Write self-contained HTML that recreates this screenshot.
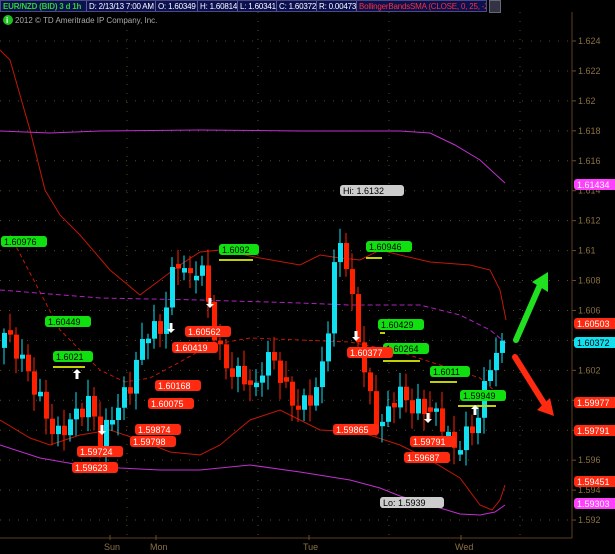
<!DOCTYPE html>
<html><head><meta charset="utf-8">
<style>
body{margin:0;background:#000;width:615px;height:554px;overflow:hidden;font-family:"Liberation Sans",sans-serif}
#top{position:absolute;left:0;top:0;width:487px;height:12px;background:#0a1050;border:1px solid #4a4a80;box-sizing:border-box;font-size:8px;letter-spacing:-0.2px;line-height:11px;white-space:nowrap;overflow:hidden;display:flex}
#top span{box-sizing:border-box;color:#fff;padding:0 2px;border-right:1px solid #5a5a90;overflow:hidden;flex:none}
</style></head><body>
<div id="top"><span style="color:#2fd02f;font-weight:bold;width:86px">EUR/NZD (BID) 3 d 1h</span><span style="width:69px">D: 2/13/13 7:00 AM</span><span style="width:42px">O: 1.60349</span><span style="width:40px">H: 1.60814</span><span style="width:39px">L: 1.60341</span><span style="width:40px">C: 1.60372</span><span style="width:40px">R: 0.00473</span><span style="color:#ff3030;border:none;width:130px">BollingerBandsSMA (CLOSE, 0, 25, -2...</span></div>
<div style="position:absolute;left:489px;top:0;width:10px;height:11px;background:#334;border:1px solid #667"></div>
<svg id="s" width="615" height="554" style="position:absolute;left:0;top:0"></svg>
<script>
const s=document.getElementById('s');let h='';
const Y=p=>41+(1.624-p)/0.002*29.94;
for(let p=1.592;p<=1.6241;p+=0.002){const y=Y(p);h+=`<line x1="0" x2="572" y1="${y}" y2="${y}" stroke="#5a4a20" stroke-dasharray="1,8"/>`;
h+=`<line x1="572" x2="576" y1="${y}" y2="${y}" stroke="#6a5020"/><text x="578" y="${y+3}" fill="#8a7040" font-size="9">${(+p.toFixed(3)).toString()}</text>`;}
for(const x of [127,258,389,520])h+=`<line x1="${x}" x2="${x}" y1="12" y2="537" stroke="#5a4a20" stroke-dasharray="1,8"/>`;
h+=`<line x1="572" x2="572" y1="12" y2="538" stroke="#5a4020"/><line x1="0" x2="572" y1="538" y2="538" stroke="#5a4020"/>`;
for(const [x,t] of [[104,'Sun'],[150,'Mon'],[303,'Tue'],[455,'Wed']])h+=`<text x="${x}" y="550" fill="#8a7040" font-size="9">${t}</text><line x1="${x+6}" x2="${x+6}" y1="535" y2="540" stroke="#6a5020"/>`;
const pl=(pts,c,d,w)=>`<polyline fill="none" stroke="${c}" stroke-width="${w||1}" ${d?'stroke-dasharray="'+d+'"':''} points="${pts}"/>`;
h+=pl('0,50 10,60 30,130 45,190 60,215 80,235 110,270 140,295 160,280 180,265 200,252 220,250 260,258 300,265 320,255 340,258 360,260 380,250 400,255 430,262 470,265 490,270 500,290 506,320','#c01808');
h+=pl('0,420 30,438 50,445 80,435 110,430 140,440 170,452 200,455 220,445 250,420 280,410 300,420 320,430 360,432 400,445 430,460 460,478 480,505 492,510 500,500 505,485','#c01808');
h+=pl('10,235 60,330 100,370 125,382 150,378 180,362 210,345 250,338 300,340 350,342 400,352 440,365 480,378 505,400','#c01808','4,3');
h+=pl('0,290 100,298 200,300 300,303 350,305 420,305 460,315 490,330 506,343','#b020c0','5,3');
h+=pl('0,131 50,133 100,131 200,130 300,131 400,131 430,133 455,145 480,160 505,183','#c030d0');
h+=pl('0,445 40,458 80,465 120,468 160,470 200,470 250,465 300,472 350,480 380,488 400,496 430,505 460,514 480,515 495,512 505,505','#c030d0');
const kp=[[4,1.6045],[20,1.603],[40,1.600],[55,1.5975],[75,1.599],[90,1.6],[100,1.5972],[112,1.599],[130,1.601],[140,1.6035],[150,1.605],[160,1.6045],[170,1.608],[180,1.6095],[190,1.608],[200,1.6095],[210,1.6056],[218,1.6035],[228,1.602],[245,1.6015],[255,1.6005],[265,1.603],[275,1.6025],[290,1.6],[300,1.5995],[315,1.6005],[325,1.603],[333,1.6085],[340,1.6105],[347,1.609],[353,1.606],[360,1.6035],[368,1.6005],[380,1.598],[392,1.6],[402,1.6005],[412,1.5995],[425,1.5995],[440,1.5988],[455,1.5965],[462,1.5975],[472,1.598],[480,1.5995],[490,1.6025],[500,1.6035],[505,1.6037]];
const ip=x=>{for(let i=1;i<kp.length;i++)if(x<=kp[i][0]){const a=kp[i-1],b=kp[i];return a[1]+(b[1]-a[1])*(x-a[0])/(b[0]-a[0]);}return 1.6037};
let prev=1.6035;
for(let x=4,i=0;x<=505;x+=6,i++){let c=ip(x)+Math.sin(i*2.3)*0.0006;if(x>=503)c=1.60372;let o=prev;if(Math.abs(c-o)<0.0002)o=c+0.0003*(i%2?1:-1);const up=c>o;const hi=Math.max(o,c)+0.0003+Math.abs(Math.sin(i*1.7))*0.0008,lo=Math.min(o,c)-0.0003-Math.abs(Math.cos(i*1.3))*0.0008;const col=up?'#10e0f0':'#ff2000';
h+=`<line x1="${x}" x2="${x}" y1="${Y(x>=503?1.60814:hi)}" y2="${Y(lo)}" stroke="${col}"/><rect x="${x-2}" y="${Y(Math.max(o,c))}" width="5" height="${Math.max(2,Math.abs(Y(o)-Y(c)))}" fill="${col}"/>`;prev=c;}
const lab=(x,y,t,bg,fg)=>`<rect x="${x}" y="${y}" width="${t.length*6+4}" height="11" rx="3" fill="${bg}"/><text x="${x+3}" y="${y+9}" fill="${fg||'#fff'}" font-size="9">${t}</text>`;
[[1,236,'1.60976'],[45,316,'1.60449'],[53,351,'1.6021'],[219,244,'1.6092'],[366,241,'1.60946'],[378,319,'1.60429'],[383,343,'1.60264'],[430,366,'1.6011'],[460,390,'1.59949']].forEach(a=>h+=lab(a[0],a[1],a[2],'#10e010','#000'));
[[185,326,'1.60562'],[172,342,'1.60419'],[155,380,'1.60168'],[148,398,'1.60075'],[135,424,'1.59874'],[130,436,'1.59798'],[77,446,'1.59724'],[72,462,'1.59623'],[347,347,'1.60377'],[333,424,'1.59865'],[410,436,'1.59791'],[404,452,'1.59687']].forEach(a=>h+=lab(a[0],a[1],a[2],'#ff2a10'));
h+=lab(340,185,'Hi: 1.6132','#ccc','#000')+lab(380,497,'Lo: 1.5939','#ccc','#000');
[[574,179,'1.61434','#ff40ff'],[574,318,'1.60503','#ff2a10'],[574,337,'1.60372','#10e0f0'],[574,397,'1.59977','#ff2a10'],[574,425,'1.59791','#ff2a10'],[574,476,'1.59451','#ff2a10'],[574,498,'1.59303','#ff40ff']].forEach(a=>h+=lab(a[0],a[1],a[2],a[3],a[3]=='#10e0f0'?'#000':'#fff'));
[[53,367,85],[219,260,253],[366,258,382],[380,333,385],[383,361,420],[430,382,457],[458,406,496]].forEach(a=>h+=`<line x1="${a[0]}" x2="${a[2]}" y1="${a[1]}" y2="${a[1]}" stroke="#c0d000" stroke-width="2"/>`);
[[171,330,1],[210,305,1],[102,432,1],[356,338,1],[428,420,1],[475,408,-1],[77,372,-1]].forEach(a=>h+=`<path d="M${a[0]-1.5},${a[1]-7*a[2]} h3 v${6*a[2]} h2.5 l-4,${4*a[2]} l-4,${-4*a[2]} h2.5z" fill="#fff"/>`);
h+=`<line x1="516" y1="340" x2="540" y2="285" stroke="#20e020" stroke-width="6" stroke-linecap="round"/><path d="M532,282 L548,272 L548,292z" fill="#20e020"/>`;
h+=`<line x1="515" y1="357" x2="545" y2="405" stroke="#ff2a10" stroke-width="6" stroke-linecap="round"/><path d="M537,410 L554,416 L550,398z" fill="#ff2a10"/>`;
h+=`<circle cx="8" cy="20" r="5" fill="#20c020"/><text x="6" y="23" fill="#fff" font-size="8" font-weight="bold">i</text><text x="15" y="23" fill="#aaa" font-size="8">2012 © TD Ameritrade IP Company, Inc.</text>`;
s.innerHTML=h;
</script>
</body></html>
